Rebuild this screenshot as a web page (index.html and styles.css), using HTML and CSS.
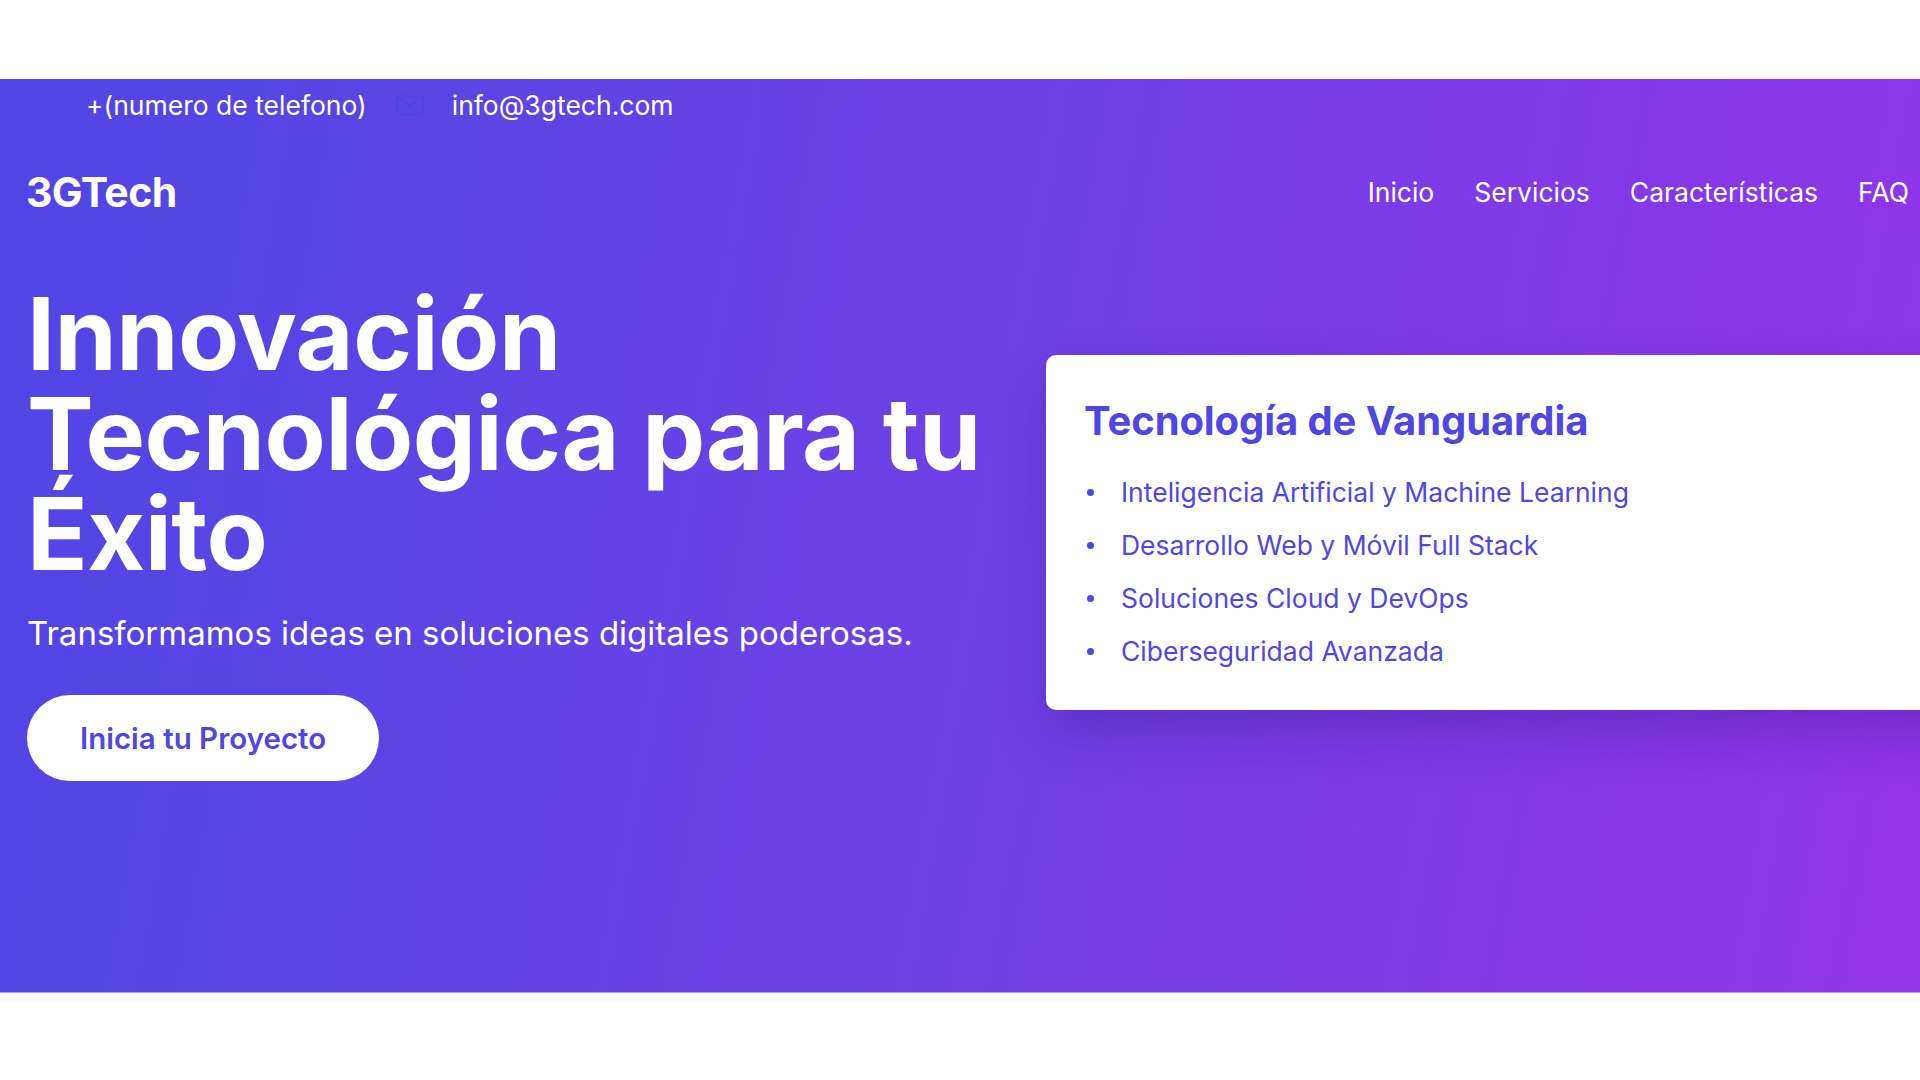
FILE: index.html
```html
<!DOCTYPE html>
<html lang="es">
<head>
<meta charset="utf-8">
<title>3GTech</title>
<link rel="stylesheet" href="styles.css">
</head>
<body>
<div class="top-space"></div>
<section class="hero">
  <div class="topbar">
    <span class="contact-item">+(numero de telefono)</span>
    <span class="contact-item">
      <svg class="mail-icon" width="28" height="20" viewBox="0 0 28 20" aria-hidden="true">
        <rect x="1" y="1" width="26" height="18" rx="2" fill="none" stroke="#4c45e0" stroke-width="1.6"/>
        <path d="M1.5 2 L14 11 L26.5 2" fill="none" stroke="#4c45e0" stroke-width="1.6"/>
      </svg>
      <span>info@3gtech.com</span>
    </span>
  </div>
  <header class="header">
    <div class="logo">3GTech</div>
    <nav class="nav">
      <a href="#">Inicio</a>
      <a href="#">Servicios</a>
      <a href="#">Características</a>
      <a href="#">FAQ</a>
    </nav>
  </header>
  <div class="hero-grid">
    <div class="hero-text">
      <h1 class="hero-title">Innovación Tecnológica para tu Éxito</h1>
      <p class="hero-sub">Transformamos ideas en soluciones digitales poderosas.</p>
      <a class="cta" href="#">Inicia tu Proyecto</a>
    </div>
    <div class="card">
      <h3 class="card-title">Tecnología de Vanguardia</h3>
      <ul class="card-list">
        <li>Inteligencia Artificial y Machine Learning</li>
        <li>Desarrollo Web y Móvil Full Stack</li>
        <li>Soluciones Cloud y DevOps</li>
        <li>Ciberseguridad Avanzada</li>
      </ul>
    </div>
  </div>
</section>
<div class="next-strip"></div>
</body>
</html>
```
FILE: styles.css
```css
* { box-sizing: border-box; }
html, body { margin: 0; padding: 0; }
body {
  font-family: Inter, "Noto Sans", "Liberation Sans", sans-serif;
  background: #ffffff;
  overflow-x: hidden;
}
.top-space { height: 79px; background: #fff; }
.hero {
  height: 914px;
  background: linear-gradient(100deg, #4f46e5 0%, #6a42e6 45%, #9333ea 100%);
  color: #fff;
  overflow: hidden;
  border-bottom: 1px solid #b49af2;
}
.topbar {
  height: 52px;
  display: flex;
  align-items: center;
  gap: 29px;
  padding-left: 86px;
  font-size: 26.5px;
  line-height: 32px;
}
.contact-item { display: flex; align-items: center; gap: 28px; }
.mail-icon { display: block; }
.header {
  height: 122px;
  display: flex;
  align-items: center;
  padding: 0 11px 0 26px;
}
.logo { font-size: 41px; font-weight: 700; letter-spacing: -0.6px; }
.nav { margin-left: auto; display: flex; gap: 40px; }
.nav a { color: #fff; text-decoration: none; font-size: 26.5px; }
.hero-grid {
  margin-top: 31px;
  display: grid;
  grid-template-columns: 1000px 1000px;
  column-gap: 19px;
  align-items: center;
  padding-left: 27px;
}
.hero-title {
  margin: 0;
  font-size: 100px;
  line-height: 100px;
  font-weight: 700;
  letter-spacing: -0.5px;
}
.hero-sub {
  margin: 25px 0 38px;
  font-size: 33px;
  line-height: 48px;
}
.cta {
  display: inline-block;
  background: #fff;
  color: #4f46e5;
  text-decoration: none;
  font-size: 29.5px;
  font-weight: 600;
  line-height: 36px;
  padding: 25px 53px;
  border-radius: 50px;
}
.card {
  background: #fff;
  border-radius: 10px;
  padding: 42px 40px 39px 38px;
  box-shadow: 0 25px 50px rgba(40, 20, 120, 0.28);
}
.card-title {
  margin: 0 0 27px;
  color: #4f46e5;
  font-size: 40px;
  line-height: 48px;
  font-weight: 700;
  letter-spacing: -0.1px;
}
.card-list {
  list-style: none;
  margin: 0;
  padding: 0;
  display: flex;
  flex-direction: column;
  gap: 13px;
}
.card-list li {
  display: flex;
  align-items: center;
  color: #4f46e5;
  font-size: 26.5px;
  line-height: 40px;
}
.card-list li::before {
  content: "";
  width: 7px;
  height: 7px;
  border-radius: 50%;
  background: #4f46e5;
  margin: 0 27px 0 3px;
  flex: none;
}
.next-strip { height: 8px; background: #f8f9fb; }
```
